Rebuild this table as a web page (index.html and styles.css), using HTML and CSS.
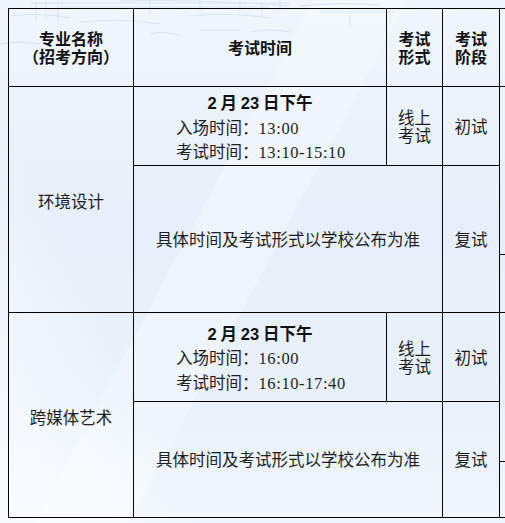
FILE: index.html
```html
<!DOCTYPE html>
<html lang="zh-CN">
<head>
<meta charset="utf-8">
<title>考试安排</title>
<link rel="stylesheet" href="styles.css">
</head>
<body>
<svg class="sketch" width="505" height="60" viewBox="0 0 505 60" aria-hidden="true">
  <g fill="none" stroke="#cfe0f1" stroke-width="1">
    <path d="M30 3 H290 M60 7 H270 M120 1 Q200 -1 290 6"/>
    <path d="M36 1 V20 M46 3 V18 M58 2 V22 M150 1 V14 M200 0 V12 M240 0 V12 M262 2 V16 M280 0 V10"/>
    <path d="M10 16 Q40 12 70 18 M80 22 Q120 18 160 24 M190 16 Q230 12 270 18"/>
    <path d="M300 6 Q340 2 380 5 M320 12 H395 M350 14 V26 M390 8 V20"/>
    <path d="M150 34 Q165 30 180 36 M200 30 H240 M250 32 Q270 28 290 32 M0 44 Q20 40 40 44"/>
  </g>
</svg>
<table class="exam">
  <colgroup>
    <col class="c-major">
    <col class="c-time">
    <col class="c-form">
    <col class="c-stage">
    <col class="c-extra">
  </colgroup>
  <tr class="r-head">
    <th><div class="hl">专业名称</div><div class="hl">（招考方向）</div></th>
    <th>考试时间</th>
    <th><div class="hl">考试</div><div class="hl">形式</div></th>
    <th><div class="hl">考试</div><div class="hl">阶段</div></th>
    <th></th>
  </tr>
  <tr class="r-a">
    <td rowspan="3" class="major">环境设计</td>
    <td class="slot">
      <div class="date"><span class="num">2</span> 月 <span class="num">23</span> 日下午</div>
      <div class="line">入场时间：<span class="digits">13:00</span></div>
      <div class="line">考试时间：<span class="digits">13:10-15:10</span></div>
    </td>
    <td class="two"><div class="tl">线上</div><div class="tl">考试</div></td>
    <td>初试</td>
    <td rowspan="2"></td>
  </tr>
  <tr class="r-b1">
    <td colspan="2" rowspan="2">具体时间及考试形式以学校公布为准</td>
    <td rowspan="2">复试</td>
  </tr>
  <tr class="r-b2">
    <td></td>
  </tr>
  <tr class="r-c">
    <td rowspan="3" class="major">跨媒体艺术</td>
    <td class="slot">
      <div class="date"><span class="num">2</span> 月 <span class="num">23</span> 日下午</div>
      <div class="line">入场时间：<span class="digits">16:00</span></div>
      <div class="line">考试时间：<span class="digits">16:10-17:40</span></div>
    </td>
    <td class="two"><div class="tl">线上</div><div class="tl">考试</div></td>
    <td>初试</td>
    <td rowspan="2"></td>
  </tr>
  <tr class="r-d1">
    <td colspan="2" rowspan="2">具体时间及考试形式以学校公布为准</td>
    <td rowspan="2">复试</td>
  </tr>
  <tr class="r-d2">
    <td></td>
  </tr>
</table>
</body>
</html>
```

FILE: styles.css
```css
html, body {
  overflow: hidden;
}
body {
  margin: 0;
  padding: 8px 0 0 8px;
  width: 505px;
  height: 523px;
  box-sizing: border-box;
  position: relative;
  color: #1e1e1e;
  font-family: "Liberation Serif", "Noto Sans CJK SC", serif;
  font-size: 16.5px;
  background:
    linear-gradient(118deg, rgba(255,255,255,0) 0 40%, rgba(255,255,255,0.28) 40% 52%, rgba(255,255,255,0) 52%),
    linear-gradient(62deg, rgba(255,255,255,0.5) 0 10%, rgba(255,255,255,0) 28%),
    linear-gradient(180deg, #f0f6fc 0%, #e7f0fa 40%, #e8f1fa 75%, #f0f6fc 100%);
}
.sketch {
  position: absolute;
  left: 0;
  top: 0;
  opacity: 0.7;
}
.exam {
  position: relative;
  border-collapse: collapse;
  table-layout: fixed;
  width: 573px;
}
.c-major { width: 125px; }
.c-time { width: 253px; }
.c-form { width: 56px; }
.c-stage { width: 57px; }
.c-extra { width: 82px; }

.exam th, .exam td {
  border: 1px solid #000;
  padding: 0;
  text-align: center;
  vertical-align: middle;
}
.exam th {
  font-family: "Noto Sans CJK SC", sans-serif;
  font-weight: 700;
  font-size: 16px;
  line-height: 17.5px;
  color: #111;
}
.hl, .tl {
  height: 17.5px;
  line-height: 17.5px;
  overflow: visible;
}
.tl {
  height: 18px;
  line-height: 18px;
}
.exam td {
  font-family: "Noto Sans CJK SC", sans-serif;
  font-weight: 400;
  line-height: 18px;
}
.r-head { height: 78px; }
.r-a { height: 78px; }
.r-b1 { height: 89px; }
.r-b2 { height: 58px; }
.r-c { height: 89px; }
.r-d1 { height: 60px; }
.r-d2 { height: 56px; }

.exam td.major { padding-top: 4px; }
.exam td.slot {
  padding-top: 4px;
  line-height: 23.5px;
}
.date {
  font-weight: 700;
  color: #111;
}
.num {
  font-family: "Liberation Sans", sans-serif;
  font-weight: 700;
}
.line {
  text-align: left;
  padding-left: 42px;
}
.digits {
  font-family: "Liberation Serif", serif;
  letter-spacing: 0.6px;
}
```
